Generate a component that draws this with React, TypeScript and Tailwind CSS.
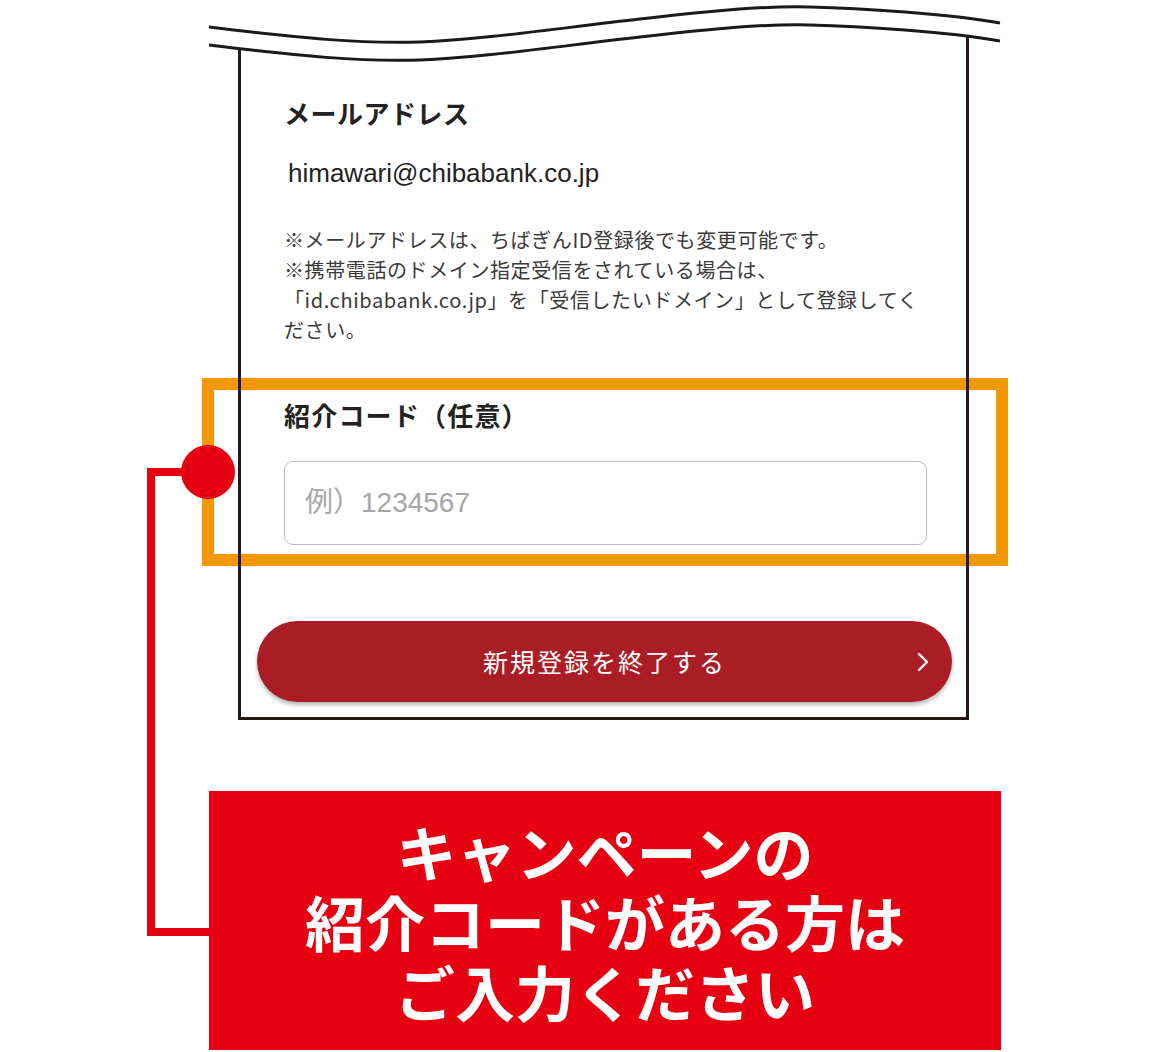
import React from 'react';

const JP = "font-['Noto_Sans_CJK_JP',sans-serif]";

// top edge of the cut-off phone screen: two parallel wavy lines
function WaveEdge() {
    const top = 'M209 27 C 300 38, 360 44, 420 42 S 560 28, 640 19 S 760 6, 810 7 S 950 14, 1000 23';
    const low = 'M209 45 C 300 56, 360 62, 420 60 S 560 46, 640 37 S 760 24, 810 25 S 950 32, 1000 41';
    return (
        <svg className="absolute left-0 top-0 z-20" width="1152" height="70" viewBox="0 0 1152 70">
            <path d={low + ' L1000 0 L209 0 Z'} fill="#ffffff" />
            <path d={top} fill="none" stroke="#1a1a1a" strokeWidth="3" />
            <path d={low} fill="none" stroke="#1a1a1a" strokeWidth="3" />
        </svg>
    );
}

export default function App() {
    return (
        <div className={`relative w-[1152px] h-[1052px] overflow-hidden bg-white ${JP}`}>
            {/* highlight around the referral code field */}
            <div className="absolute left-[202px] top-[378px] w-[806px] h-[188px] border-[12px] border-[#f39800] z-0" />

            {/* phone screen */}
            <div className="relative z-10 mt-[30px] ml-[238px] w-[731px] border-x-[3px] border-b-[3px] border-[#231815] pl-[43px] pr-[30px] pt-[65px] pb-[15px]">
                <h2 className="text-[26px] leading-[36px] font-semibold tracking-[0.5px] text-[#222]">メールアドレス</h2>
                <p className="mt-[24px] pl-[4px] text-[26px] leading-[36px] text-[#222] font-['Liberation_Sans',sans-serif]">
                    himawari@chibabank.co.jp
                </p>
                <p className="mt-[34px] text-[20px] leading-[30px] tracking-[0.6px] text-[#3a3a3a]">
                    ※メールアドレスは、ちばぎんID登録後でも変更可能です。<br />
                    ※携帯電話のドメイン指定受信をされている場合は、<br />
                    「id.chibabank.co.jp」を「受信したいドメイン」として登録してく<br />
                    ださい。
                </p>

                <h2 className="mt-[52px] text-[26px] leading-[36px] font-semibold tracking-[1.2px] text-[#222]">紹介コード（任意）</h2>
                <input
                    type="text"
                    placeholder="例）1234567"
                    className="mt-[28px] block w-[643px] h-[84px] rounded-[9px] border-[1.5px] border-[#b8bec6] bg-white px-[20px] text-[28px] text-[#333] placeholder:text-[#a6a6a6] outline-none font-['Liberation_Sans','Noto_Sans_CJK_JP',sans-serif]"
                />

                <button className="relative -ml-[27px] mt-[76px] flex h-[81px] w-[695px] items-center justify-center rounded-full bg-[#aa1d25] shadow-[0_3px_4px_rgba(0,0,0,0.28)]">
                    <span className="text-[25px] tracking-[2px] text-white">新規登録を終了する</span>
                    <svg className="absolute right-[23px] top-1/2 -translate-y-1/2" width="12" height="20" viewBox="0 0 12 20">
                        <polyline points="2,2 10,10 2,18" fill="none" stroke="#ffffff" strokeWidth="2.4" strokeLinecap="round" strokeLinejoin="round" />
                    </svg>
                </button>
            </div>

            {/* callout */}
            <div className="mt-[71px] ml-[209px] flex h-[259px] w-[792px] flex-col items-center justify-center bg-[#e60012] text-center text-[60px] font-bold text-white">
                <div className="h-[70px] leading-[70px]">キャンペーンの</div>
                <div className="h-[70px] leading-[70px]">紹介コードがある方は</div>
                <div className="h-[70px] leading-[70px]">ご入力ください</div>
            </div>

            <WaveEdge />

            {/* connector from callout to field */}
            <svg className="absolute left-0 top-0 z-30 pointer-events-none" width="1152" height="1052" viewBox="0 0 1152 1052">
                <polyline points="190,472 151,472 151,932 209,932" fill="none" stroke="#e60012" strokeWidth="8" strokeLinejoin="miter" />
            </svg>
            <div className="absolute left-[181px] top-[445px] z-30 h-[54px] w-[54px] rounded-full bg-[#e60012]" />
        </div>
    );
}
